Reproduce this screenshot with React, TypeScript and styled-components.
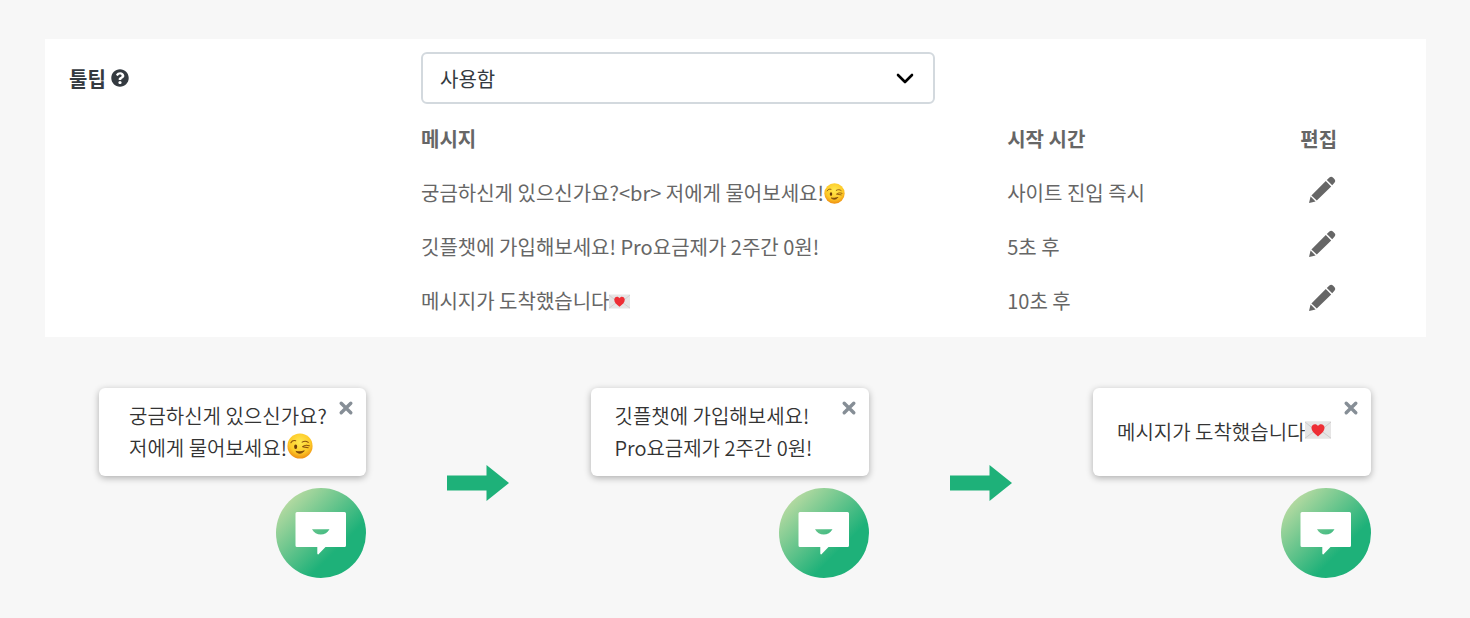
import React from 'react';
import styled, { createGlobalStyle } from 'styled-components';
import { FaQuestionCircle } from 'react-icons/fa';

const GlobalStyle = createGlobalStyle`
  * { box-sizing: border-box; }
  body {
    margin: 0;
    background: #f7f7f7;
    font-family: "Noto Sans CJK KR", sans-serif;
    font-size: 20px;
  }
`;

const Page = styled.main`
  padding: 39px 44px 40px 45px;
`;

const SettingsCard = styled.section`
  display: flex;
  align-items: flex-start;
  padding: 13px 28px 9px 24px;
  background: #fff;
`;

const SettingLabel = styled.label`
  display: flex;
  align-items: center;
  gap: 5px;
  flex: 0 0 352px;
  height: 52px;
  font-weight: 700;
  color: #343a40;
`;

const SettingBody = styled.div`
  flex: 1;
  min-width: 0;
`;

const SelectWrap = styled.div`
  display: grid;
  align-items: center;
  width: 514px;
  max-width: 100%;

  > * { grid-area: 1 / 1; }
  > svg {
    justify-self: end;
    margin-right: 21px;
    pointer-events: none;
  }
`;

const Select = styled.select`
  appearance: none;
  width: 100%;
  height: 52px;
  padding: 0 17px;
  border: 2px solid #d3d9de;
  border-radius: 6px;
  background: #fff;
  color: #343a40;
  font: inherit;
`;

const MessageTable = styled.table`
  width: 100%;
  margin-top: 8px;
  border-collapse: collapse;
  table-layout: fixed;
  color: #666;
`;

const HeadCell = styled.th<{ $width: string }>`
  width: ${(p) => p.$width};
  height: 54px;
  padding: 0 0 2px;
  text-align: left;
  font-weight: 700;
`;

const Cell = styled.td`
  height: 54px;
  padding: 0;
  line-height: 30px;
  white-space: nowrap;
`;

const EditButton = styled.button`
  display: block;
  margin: 0 0 6px 8px;
  padding: 0;
  border: 0;
  background: none;
  color: #666;

  svg { display: block; }
`;

const Flow = styled.section`
  display: flex;
  justify-content: space-between;
  align-items: center;
  padding: 51px 55px 0 54px;
`;

const Preview = styled.div`
  display: flex;
  flex-direction: column;
  align-items: flex-end;
  gap: 12px;
`;

const Bubble = styled.div<{ $wide?: boolean }>`
  display: flex;
  justify-content: space-between;
  width: ${(p) => (p.$wide ? 278 : 267)}px;
  height: 88px;
  padding: 12px 12px 12px ${(p) => (p.$wide ? 24 : 30)}px;
  border-radius: 6px;
  background: #fff;
  box-shadow: 0 2px 7px rgba(0, 0, 0, 0.3);
`;

const BubbleText = styled.p`
  align-self: center;
  margin: 0;
  font-weight: 350;
  line-height: 32px;
  color: #333;
  white-space: nowrap;
`;

const CloseButton = styled.button`
  align-self: flex-start;
  padding: 0;
  border: 0;
  background: none;

  svg { display: block; }
`;

const LaunchButton = styled.button`
  width: 90px;
  height: 90px;
  padding: 0;
  border: 0;
  border-radius: 50%;
  background: linear-gradient(135deg, #b9dba2 12%, #1eb179 68%);

  svg { display: block; }
`;

const EmojiSvg = styled.svg`
  display: inline-block;
  vertical-align: -3px;
`;

const Wink = ({ size }: { size: number }) => (
  <EmojiSvg width={size} height={size} viewBox="0 0 24 24" role="img" aria-label="😉">
    <defs>
      <radialGradient id="face" cx="50%" cy="35%" r="65%">
        <stop offset="0" stopColor="#ffe94f" />
        <stop offset="0.65" stopColor="#fdc928" />
        <stop offset="1" stopColor="#ee8f12" />
      </radialGradient>
    </defs>
    <circle cx="12" cy="12" r="11.6" fill="url(#face)" />
    <ellipse cx="8" cy="12.600" rx="1.4" ry="2.1" fill="#6b3a08" />
    <path d="M3.600 9C4.600 7.200 6 6.600 8 7.200M14 8.400c2-1.200 4-1 5.600.2M14.400 12.600c1.800-1.600 4-1.600 6.200-.8M15 12.800l4.600.8" fill="none" stroke="#8a520d" strokeWidth="1" strokeLinecap="round" />
    <path d="M8.2 17c2.400 2.400 5.600 2.200 7.800-.6-2.600 1-5.200 1.200-7.800.6z" fill="#7c470b" stroke="#7c470b" strokeWidth=".8" strokeLinejoin="round" />
  </EmojiSvg>
);

const LoveLetter = ({ size }: { size: number }) => (
  <EmojiSvg width={size} height={size} viewBox="0 0 24 24" role="img" aria-label="💌">
    <rect x="0" y="4" width="24" height="16" rx="0.6" fill="#e6e5e5" />
    <path d="M0 4.6 9.6 12.4 0 19.6M24 4.6l-9.6 7.8 9.6 7.2" fill="none" stroke="#c4c2c2" strokeWidth="0.7" />
    <path d="M12 18C8.6 15.400 6 13 6 10c0-3.600 4.400-4.600 6-1.600C13.600 5.400 18 6.400 18 10c0 3-2.600 5.400-6 8z" fill="#ee2e35" />
  </EmojiSvg>
);

const Pencil = () => (
  <svg width="28" height="28" viewBox="0 0 28 28" fill="currentColor" aria-hidden="true">
    <path d="M1 27 2.600 20.600 7.600 25.400zM3.400 19.400 17.800 5 23.200 10.400 8.800 24.400zM18.800 4 21.400 1.500Q23.200 0 24.900 1.500L26.600 3.200Q28 4.800 26.600 6.600L24.200 9.300z" />
  </svg>
);

const Chevron = () => (
  <svg width="18" height="12" viewBox="0 0 18 12" aria-hidden="true">
    <path d="M2 3l7 7 7-7" fill="none" stroke="#000" strokeWidth="2.600" strokeLinecap="round" strokeLinejoin="round" />
  </svg>
);

const Cross = () => (
  <svg width="16" height="16" viewBox="0 0 16 16" aria-hidden="true">
    <path d="M3.200 3.200l9.600 9.600M12.800 3.200l-9.600 9.600" stroke="#868e96" strokeWidth="3.400" strokeLinecap="round" />
  </svg>
);

const Arrow = () => (
  <svg width="62" height="36" viewBox="0 0 62 36" aria-hidden="true">
    <path d="M0 10.500h39.500V0L62 18 39.500 36V25.500H0z" fill="#1eb179" />
  </svg>
);

const ChatLogo = () => (
  <svg width="90" height="90" viewBox="0 0 90 90" aria-hidden="true">
    <path
      fillRule="evenodd"
      fill="#fff"
      d="M21 24h47.500a1.500 1.500 0 0 1 1.500 1.500v32a1.500 1.500 0 0 1-1.500 1.500H49.500l-7 7.200q-1 .6-1.200-.6V59H21a1.500 1.500 0 0 1-1.500-1.500v-32A1.500 1.500 0 0 1 21 24zM36 41.200c3.500 7 14 7 17.500 0z"
    />
  </svg>
);

const messages = [
  { text: '궁금하신게 있으신가요?<br> 저에게 물어보세요!', emoji: <Wink size={21} />, start: '사이트 진입 즉시' },
  { text: '깃플챗에 가입해보세요! Pro요금제가 2주간 0원!', emoji: null, start: '5초 후' },
  { text: '메시지가 도착했습니다', emoji: <LoveLetter size={21} />, start: '10초 후' },
];

const TooltipPreview = ({ wide, children }: { wide?: boolean; children: React.ReactNode }) => (
  <Preview>
    <Bubble $wide={wide}>
      <BubbleText>{children}</BubbleText>
      <CloseButton type="button" aria-label="닫기"><Cross /></CloseButton>
    </Bubble>
    <LaunchButton type="button" aria-label="채팅 열기"><ChatLogo /></LaunchButton>
  </Preview>
);

export default function App() {
  return (
    <Page>
      <GlobalStyle />
      <SettingsCard>
        <SettingLabel htmlFor="tooltip-use">
          툴팁 <FaQuestionCircle size={18} aria-hidden="true" />
        </SettingLabel>
        <SettingBody>
          <SelectWrap>
            <Select id="tooltip-use" defaultValue="on">
              <option value="on">사용함</option>
            </Select>
            <Chevron />
          </SelectWrap>
          <MessageTable>
            <thead>
              <tr>
                <HeadCell $width="60%">메시지</HeadCell>
                <HeadCell $width="30%">시작 시간</HeadCell>
                <HeadCell $width="10%">편집</HeadCell>
              </tr>
            </thead>
            <tbody>
              {messages.map((m) => (
                <tr key={m.start}>
                  <Cell>{m.text}{m.emoji}</Cell>
                  <Cell>{m.start}</Cell>
                  <Cell>
                    <EditButton type="button" aria-label="편집"><Pencil /></EditButton>
                  </Cell>
                </tr>
              ))}
            </tbody>
          </MessageTable>
        </SettingBody>
      </SettingsCard>
      <Flow>
        <TooltipPreview>
          궁금하신게 있으신가요?<br />저에게 물어보세요!<Wink size={26} />
        </TooltipPreview>
        <Arrow />
        <TooltipPreview wide>
          깃플챗에 가입해보세요!<br />Pro요금제가 2주간 0원!
        </TooltipPreview>
        <Arrow />
        <TooltipPreview wide>
          메시지가 도착했습니다<LoveLetter size={26} />
        </TooltipPreview>
      </Flow>
    </Page>
  );
}
